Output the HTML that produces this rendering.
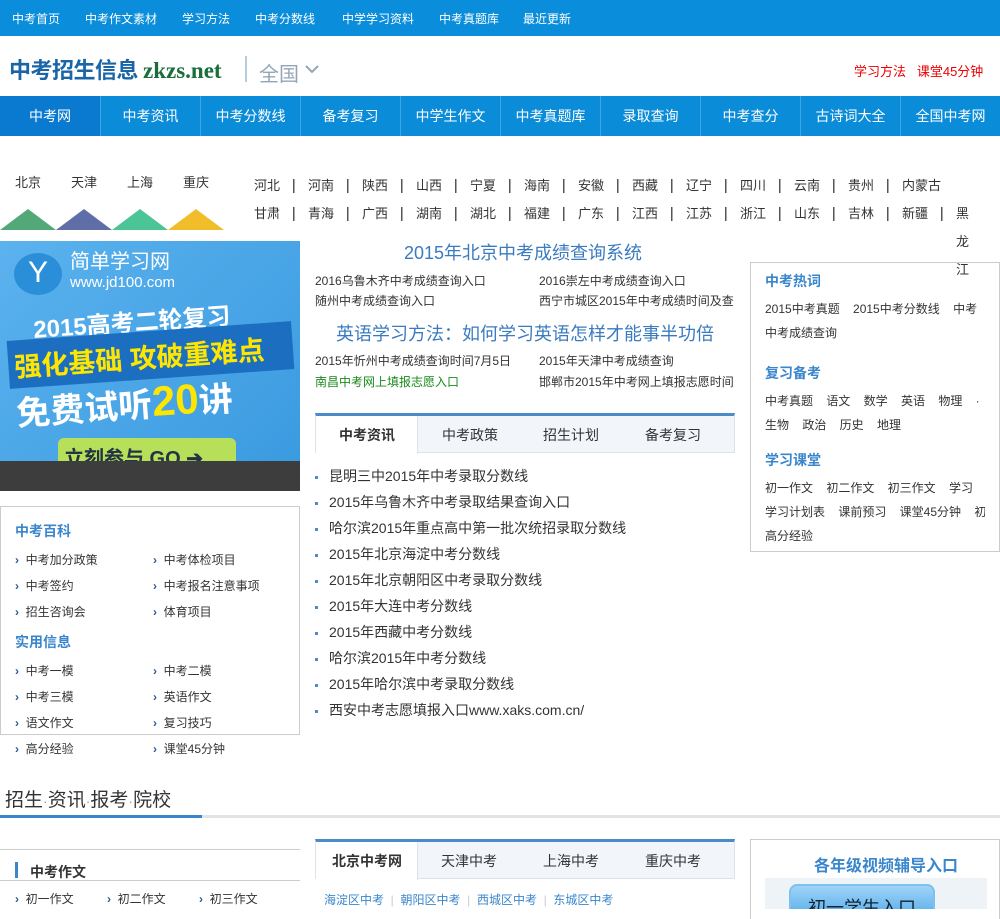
<!DOCTYPE html>
<html><head><meta charset="utf-8"><style>
*{margin:0;padding:0;box-sizing:border-box}
body{width:1000px;height:909px;overflow:hidden;background:#fff;font-family:"Liberation Sans","Noto Sans CJK SC",sans-serif;font-size:13px;color:#333;position:relative}
.a{position:absolute;white-space:nowrap}
.top{left:0;top:0;width:1000px;height:36px;background:#0a8ddb}
.top span{position:absolute;top:10px;color:#fff;font-size:12px}
.nav{left:0;top:96px;width:1000px;height:40px;background:#0b8cd9}
.nav div{position:absolute;top:0;width:100px;height:40px;line-height:40px;text-align:center;color:#fff;font-size:14px;border-left:1px solid #3fa6e6}
.pv{font-size:13px;color:#333;position:absolute;line-height:16px}
.lnk{font-size:12px;color:#333}
.box{border:1px solid #ccc}
.h{color:#3a86cc;font-weight:bold;font-size:14px}
.ar{color:#2a5a9a;font-weight:bold}
.li{height:26px;line-height:26px;overflow:hidden}
.li b{display:inline-block;width:3px;height:3px;background:#4a8bc8;vertical-align:middle;margin-right:11px}
</style></head><body>
<div class="a top">
<span style="left:12px">中考首页</span><span style="left:85px">中考作文素材</span><span style="left:182px">学习方法</span><span style="left:255px">中考分数线</span><span style="left:342px">中学学习资料</span><span style="left:439px">中考真题库</span><span style="left:523px">最近更新</span>
</div>
<div class="a" style="left:9px;top:53px;font-size:22px;font-weight:bold;color:#1a65a8;letter-spacing:-0.5px">中考招生信息</div>
<div class="a" style="left:143px;top:58px;font-size:23px;font-weight:bold;color:#1a6e3a;font-family:'Liberation Serif',serif">zkzs.net</div>
<div class="a" style="left:245px;top:56px;width:2px;height:26px;background:#b8cbdb"></div>
<div class="a" style="left:259px;top:58px;font-size:20px;color:#93a6b8">全国</div>
<svg class="a" style="left:305px;top:64px" width="14" height="10"><path d="M1 2 L7 8 L13 2" stroke="#93a6b8" stroke-width="2" fill="none"/></svg>
<div class="a" style="left:854px;top:61px;font-size:13px;color:#e00">学习方法&nbsp;&nbsp;&nbsp;课堂45分钟</div>
<div class="a nav">
<div style="left:0;background:#0a79d0;border-left:none">中考网</div><div style="left:100px">中考资讯</div><div style="left:200px">中考分数线</div><div style="left:300px">备考复习</div><div style="left:400px">中学生作文</div><div style="left:500px">中考真题库</div><div style="left:600px">录取查询</div><div style="left:700px">中考查分</div><div style="left:800px">古诗词大全</div><div style="left:900px">全国中考网</div>
</div>
<div class="pv" style="left:15px;top:175px">北京</div><div class="pv" style="left:71px;top:175px">天津</div><div class="pv" style="left:127px;top:175px">上海</div><div class="pv" style="left:183px;top:175px">重庆</div>
<svg class="a" style="left:0;top:208px" width="225" height="22"><polygon points="0,22 28,1 56,22" fill="#52a877"/><polygon points="56,22 84,1 112,22" fill="#5f6ea6"/><polygon points="112,22 140,1 168,22" fill="#4cc596"/><polygon points="168,22 196,1 224,22" fill="#f2bd2b"/></svg>
<div class="pv" style="left:254px;top:178px">河北</div><div class="pv" style="left:308px;top:178px">河南</div><div class="pv" style="left:362px;top:178px">陕西</div><div class="pv" style="left:416px;top:178px">山西</div><div class="pv" style="left:470px;top:178px">宁夏</div><div class="pv" style="left:524px;top:178px">海南</div><div class="pv" style="left:578px;top:178px">安徽</div><div class="pv" style="left:632px;top:178px">西藏</div><div class="pv" style="left:686px;top:178px">辽宁</div><div class="pv" style="left:740px;top:178px">四川</div><div class="pv" style="left:794px;top:178px">云南</div><div class="pv" style="left:848px;top:178px">贵州</div><div class="pv" style="left:902px;top:178px">内蒙古</div>
<div class="pv" style="left:254px;top:206px">甘肃</div><div class="pv" style="left:308px;top:206px">青海</div><div class="pv" style="left:362px;top:206px">广西</div><div class="pv" style="left:416px;top:206px">湖南</div><div class="pv" style="left:470px;top:206px">湖北</div><div class="pv" style="left:524px;top:206px">福建</div><div class="pv" style="left:578px;top:206px">广东</div><div class="pv" style="left:632px;top:206px">江西</div><div class="pv" style="left:686px;top:206px">江苏</div><div class="pv" style="left:740px;top:206px">浙江</div><div class="pv" style="left:794px;top:206px">山东</div><div class="pv" style="left:848px;top:206px">吉林</div><div class="pv" style="left:902px;top:206px">新疆</div>
<div class="pv" style="left:956px;top:206px">黑</div><div class="pv" style="left:956px;top:234px">龙</div><div class="pv" style="left:956px;top:262px">江</div>
<svg class="a" style="left:0;top:176px" width="1000" height="50">
<g fill="#555">
<rect x="293" y="3" width="1.5" height="14"/><rect x="347" y="3" width="1.5" height="14"/><rect x="401" y="3" width="1.5" height="14"/><rect x="455" y="3" width="1.5" height="14"/><rect x="509" y="3" width="1.5" height="14"/><rect x="563" y="3" width="1.5" height="14"/><rect x="617" y="3" width="1.5" height="14"/><rect x="671" y="3" width="1.5" height="14"/><rect x="725" y="3" width="1.5" height="14"/><rect x="779" y="3" width="1.5" height="14"/><rect x="833" y="3" width="1.5" height="14"/><rect x="887" y="3" width="1.5" height="14"/>
<rect x="293" y="31" width="1.5" height="14"/><rect x="347" y="31" width="1.5" height="14"/><rect x="401" y="31" width="1.5" height="14"/><rect x="455" y="31" width="1.5" height="14"/><rect x="509" y="31" width="1.5" height="14"/><rect x="563" y="31" width="1.5" height="14"/><rect x="617" y="31" width="1.5" height="14"/><rect x="671" y="31" width="1.5" height="14"/><rect x="725" y="31" width="1.5" height="14"/><rect x="779" y="31" width="1.5" height="14"/><rect x="833" y="31" width="1.5" height="14"/><rect x="887" y="31" width="1.5" height="14"/><rect x="941" y="31" width="1.5" height="14"/>
</g></svg>
<div class="a" style="left:0;top:241px;width:300px;height:220px;background:linear-gradient(135deg,#5bb2ee,#3b9be0);overflow:hidden">
<div class="a" style="left:14px;top:12px;width:48px;height:42px;border-radius:50%;background:#2a8fd8;color:#fff;font-size:30px;text-align:center;line-height:40px">Y</div>
<div class="a" style="left:70px;top:10px;color:#fff;font-size:20px;line-height:22px">简单学习网</div>
<div class="a" style="left:70px;top:34px;color:#fff;font-size:15px;line-height:16px">www.jd100.com</div>
<div class="a" style="left:33px;top:62px;color:#fff;font-size:24px;font-weight:bold;transform:rotate(-4deg)">2015高考二轮复习</div>
<div class="a" style="left:8px;top:90px;width:285px;height:48px;background:#1c6fc0;transform:rotate(-4deg)"></div>
<div class="a" style="left:14px;top:96px;color:#ffe600;font-size:27px;font-weight:bold;transform:rotate(-4deg)">强化基础 攻破重难点</div>
<div class="a" style="left:16px;top:138px;color:#fff;font-size:34px;font-weight:bold;transform:rotate(-4deg)">免费试听<span style="color:#ffe600;font-size:42px">20</span>讲</div>
<div class="a" style="left:58px;top:197px;width:178px;height:30px;background:#b6e05a;border-radius:6px;color:#234;font-size:20px;font-weight:bold;padding:4px 6px">立刻参与 GO ➔</div>
</div>
<div class="a" style="left:0;top:461px;width:300px;height:30px;background:#3d3d3d"></div>
<div class="a box" style="left:0;top:506px;width:300px;height:229px"></div>
<div class="a h" style="left:15px;top:521px">中考百科</div>
<div class="a lnk" style="left:15px;top:551px"><span class="ar">›</span>&nbsp;&nbsp;中考加分政策</div><div class="a lnk" style="left:153px;top:551px"><span class="ar">›</span>&nbsp;&nbsp;中考体检项目</div>
<div class="a lnk" style="left:15px;top:577px"><span class="ar">›</span>&nbsp;&nbsp;中考签约</div><div class="a lnk" style="left:153px;top:577px"><span class="ar">›</span>&nbsp;&nbsp;中考报名注意事项</div>
<div class="a lnk" style="left:15px;top:603px"><span class="ar">›</span>&nbsp;&nbsp;招生咨询会</div><div class="a lnk" style="left:153px;top:603px"><span class="ar">›</span>&nbsp;&nbsp;体育项目</div>
<div class="a h" style="left:15px;top:632px">实用信息</div>
<div class="a lnk" style="left:15px;top:662px"><span class="ar">›</span>&nbsp;&nbsp;中考一模</div><div class="a lnk" style="left:153px;top:662px"><span class="ar">›</span>&nbsp;&nbsp;中考二模</div>
<div class="a lnk" style="left:15px;top:688px"><span class="ar">›</span>&nbsp;&nbsp;中考三模</div><div class="a lnk" style="left:153px;top:688px"><span class="ar">›</span>&nbsp;&nbsp;英语作文</div>
<div class="a lnk" style="left:15px;top:714px"><span class="ar">›</span>&nbsp;&nbsp;语文作文</div><div class="a lnk" style="left:153px;top:714px"><span class="ar">›</span>&nbsp;&nbsp;复习技巧</div>
<div class="a lnk" style="left:15px;top:740px"><span class="ar">›</span>&nbsp;&nbsp;高分经验</div><div class="a lnk" style="left:153px;top:740px"><span class="ar">›</span>&nbsp;&nbsp;课堂45分钟</div>
<div class="a" style="left:404px;top:239px;font-size:18px;color:#3a7bbf">2015年北京中考成绩查询系统</div>
<div class="a lnk" style="left:315px;top:272px">2016乌鲁木齐中考成绩查询入口</div><div class="a lnk" style="left:539px;top:272px">2016崇左中考成绩查询入口</div>
<div class="a lnk" style="left:315px;top:292px">随州中考成绩查询入口</div><div class="a lnk" style="left:539px;top:292px">西宁市城区2015年中考成绩时间及查</div>
<div class="a" style="left:336px;top:320px;font-size:18px;color:#3a7bbf">英语学习方法：如何学习英语怎样才能事半功倍</div>
<div class="a lnk" style="left:315px;top:352px">2015年忻州中考成绩查询时间7月5日</div><div class="a lnk" style="left:539px;top:352px">2015年天津中考成绩查询</div>
<div class="a lnk" style="left:315px;top:373px;color:#1a8a1a">南昌中考网上填报志愿入口</div><div class="a lnk" style="left:539px;top:373px">邯郸市2015年中考网上填报志愿时间</div>
<div class="a" style="left:315px;top:413px;width:420px;height:40px;background:#f2f6fb;border:1px solid #dde3ea;border-top:3px solid #4a8bc8"></div>
<div class="a" style="left:316px;top:416px;width:102px;height:38px;background:#fff;border-right:1px solid #dde3ea"></div>
<div class="a" style="left:339px;top:425px;font-size:14px;font-weight:bold;color:#333">中考资讯</div>
<div class="a" style="left:442px;top:425px;font-size:14px">中考政策</div><div class="a" style="left:543px;top:425px;font-size:14px">招生计划</div><div class="a" style="left:645px;top:425px;font-size:14px">备考复习</div>
<div class="a" style="left:315px;top:463px;font-size:14px;white-space:normal;width:420px">
<div class="li"><b></b>昆明三中2015年中考录取分数线</div>
<div class="li"><b></b>2015年乌鲁木齐中考录取结果查询入口</div>
<div class="li"><b></b>哈尔滨2015年重点高中第一批次统招录取分数线</div>
<div class="li"><b></b>2015年北京海淀中考分数线</div>
<div class="li"><b></b>2015年北京朝阳区中考录取分数线</div>
<div class="li"><b></b>2015年大连中考分数线</div>
<div class="li"><b></b>2015年西藏中考分数线</div>
<div class="li"><b></b>哈尔滨2015年中考分数线</div>
<div class="li"><b></b>2015年哈尔滨中考录取分数线</div>
<div class="li"><b></b>西安中考志愿填报入口www.xaks.com.cn/</div>
</div>
<div class="a box" style="left:750px;top:262px;width:250px;height:290px;background:transparent"></div>
<div class="a h" style="left:765px;top:271px">中考热词</div>
<div class="a lnk" style="left:765px;top:300px;width:220px;overflow:hidden">2015中考真题&nbsp;&nbsp;&nbsp;&nbsp;2015中考分数线&nbsp;&nbsp;&nbsp;&nbsp;中考</div>
<div class="a lnk" style="left:765px;top:324px">中考成绩查询</div>
<div class="a h" style="left:765px;top:363px">复习备考</div>
<div class="a lnk" style="left:765px;top:392px;width:223px;overflow:hidden">中考真题&nbsp;&nbsp;&nbsp;&nbsp;语文&nbsp;&nbsp;&nbsp;&nbsp;数学&nbsp;&nbsp;&nbsp;&nbsp;英语&nbsp;&nbsp;&nbsp;&nbsp;物理&nbsp;&nbsp;&nbsp;&nbsp;·</div>
<div class="a lnk" style="left:765px;top:416px">生物&nbsp;&nbsp;&nbsp;&nbsp;政治&nbsp;&nbsp;&nbsp;&nbsp;历史&nbsp;&nbsp;&nbsp;&nbsp;地理</div>
<div class="a h" style="left:765px;top:450px">学习课堂</div>
<div class="a lnk" style="left:765px;top:479px;width:220px;overflow:hidden">初一作文&nbsp;&nbsp;&nbsp;&nbsp;初二作文&nbsp;&nbsp;&nbsp;&nbsp;初三作文&nbsp;&nbsp;&nbsp;&nbsp;学习</div>
<div class="a lnk" style="left:765px;top:503px;width:220px;overflow:hidden">学习计划表&nbsp;&nbsp;&nbsp;&nbsp;课前预习&nbsp;&nbsp;&nbsp;&nbsp;课堂45分钟&nbsp;&nbsp;&nbsp;&nbsp;初</div>
<div class="a lnk" style="left:765px;top:527px">高分经验</div>
<div class="a" style="left:5px;top:785px;font-size:19px;color:#333">招生<span style="color:#999;font-size:14px">·</span>资讯<span style="color:#999;font-size:14px">·</span>报考<span style="color:#999;font-size:14px">·</span>院校</div>
<div class="a" style="left:0;top:815px;width:1000px;height:3px;background:#e3e3e3"></div>
<div class="a" style="left:0;top:815px;width:202px;height:3px;background:#3a86cc"></div>
<div class="a" style="left:0;top:849px;width:300px;height:1px;background:#ccc"></div>
<div class="a" style="left:15px;top:862px;width:3px;height:16px;background:#3a86cc"></div>
<div class="a" style="left:30px;top:862px;font-size:14px;font-weight:bold;color:#333">中考作文</div>
<div class="a" style="left:0;top:880px;width:300px;height:1px;background:#ccc"></div>
<div class="a lnk" style="left:15px;top:890px"><span class="ar">›</span>&nbsp;&nbsp;初一作文</div><div class="a lnk" style="left:107px;top:890px"><span class="ar">›</span>&nbsp;&nbsp;初二作文</div><div class="a lnk" style="left:199px;top:890px"><span class="ar">›</span>&nbsp;&nbsp;初三作文</div>
<div class="a" style="left:315px;top:839px;width:420px;height:40px;background:#f2f6fb;border:1px solid #dde3ea;border-top:3px solid #4a8bc8"></div>
<div class="a" style="left:316px;top:842px;width:102px;height:38px;background:#fff;border-right:1px solid #dde3ea"></div>
<div class="a" style="left:332px;top:851px;font-size:14px;font-weight:bold">北京中考网</div>
<div class="a" style="left:441px;top:851px;font-size:14px">天津中考</div><div class="a" style="left:543px;top:851px;font-size:14px">上海中考</div><div class="a" style="left:645px;top:851px;font-size:14px">重庆中考</div>
<div class="a" style="left:324px;top:891px;font-size:12px;color:#3a86cc">海淀区中考 <span style="color:#ccc">&nbsp;|&nbsp;</span> 朝阳区中考 <span style="color:#ccc">&nbsp;|&nbsp;</span> 西城区中考 <span style="color:#ccc">&nbsp;|&nbsp;</span> 东城区中考</div>
<div class="a box" style="left:750px;top:839px;width:250px;height:80px;border-bottom:none"></div>
<div class="a" style="left:814px;top:852px;font-size:16px;font-weight:bold;color:#3a86cc">各年级视频辅导入口</div>
<div class="a" style="left:765px;top:878px;width:222px;height:31px;background:#eef3f7;overflow:hidden">
<div class="a" style="left:24px;top:6px;width:146px;height:40px;background:linear-gradient(#9fd4f7,#4aa6e6);border-radius:8px;border:2px solid #7ec0ee;color:#123;font-size:18px;text-align:center;padding-top:8px">初一学生入口</div>
</div>
</body></html>
